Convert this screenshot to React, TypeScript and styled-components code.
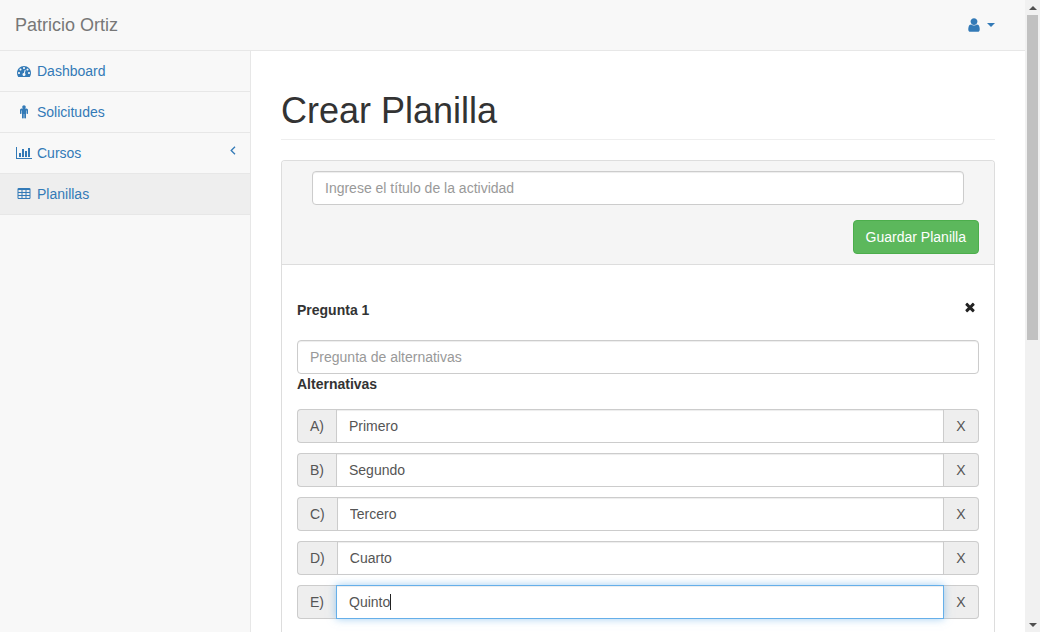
import React from 'react';
import styled, { createGlobalStyle } from 'styled-components';

const Global = createGlobalStyle`
  html, body { margin: 0; padding: 0; height: 100%; overflow: hidden; background: #fff; }
  * { box-sizing: border-box; }
  body { font-family: "Liberation Sans", Arial, sans-serif; font-size: 14px; line-height: 20px; color: #333; }
`;

const Screen = styled.div`
  display: flex;
  width: 1040px;
  height: 632px;
  overflow: hidden;
`;
const Viewport = styled.div`
  flex: 0 0 1025px;
  display: flex;
  flex-direction: column;
  height: 632px;
  overflow: hidden;
  background: #fff;
`;
const TopBar = styled.header`
  flex: 0 0 51px;
  display: flex;
  align-items: center;
  justify-content: space-between;
  padding: 0 30px 1px 15px;
  background: #f8f8f8;
  border-bottom: 1px solid #e7e7e7;
`;
const Brand = styled.a`
  font-size: 18px;
  line-height: 20px;
  color: #777;
`;
const UserMenu = styled.a`
  display: flex;
  align-items: center;
  gap: 5px;
  color: #337ab7;
  svg { display: block; fill: #337ab7; }
`;
const Caret = styled.span`
  width: 0;
  height: 0;
  border-top: 4px solid #337ab7;
  border-left: 4px solid transparent;
  border-right: 4px solid transparent;
`;
const Body = styled.div`
  flex: 1;
  display: flex;
  min-height: 0;
`;
const Sidebar = styled.nav`
  flex: 0 0 251px;
  background: #f8f8f8;
  border-right: 1px solid #e7e7e7;
`;
const MenuItem = styled.a<{ $active?: boolean }>`
  display: flex;
  align-items: center;
  height: 41px;
  padding: 0 15px;
  color: #337ab7;
  background: ${p => (p.$active ? '#eee' : 'transparent')};
  border-bottom: 1px solid #e7e7e7;
`;
const MenuIcon = styled.span<{ $pad: number }>`
  flex: 0 0 22px;
  width: 22px;
  display: flex;
  padding-left: ${p => p.$pad}px;
  svg { display: block; fill: #337ab7; }
`;
const MenuLabel = styled.span`
  flex: 1;
`;
const Chevron = styled.svg`
  display: block;
  width: 6px;
  height: 9px;
  margin: -6px -1px 0 0;
  fill: none;
  stroke: #337ab7;
  stroke-width: 1.3;
`;
const Main = styled.main`
  flex: 1;
  min-width: 0;
  display: flex;
  flex-direction: column;
  padding: 0 30px;
`;
const PageHeader = styled.div`
  margin: 40px 0 20px;
  padding-bottom: 9px;
  border-bottom: 1px solid #eee;
`;
const Title = styled.h1`
  margin: 0;
  font-size: 36px;
  font-weight: 500;
  line-height: 39px;
  color: #333;
`;
const Panel = styled.section`
  flex: 1;
  border: 1px solid #ddd;
  border-bottom: 0;
  border-radius: 4px 4px 0 0;
  background: #fff;
`;
const PanelHeading = styled.div`
  display: flex;
  flex-direction: column;
  padding: 10px 15px;
  background: #f5f5f5;
  border-bottom: 1px solid #ddd;
  border-radius: 3px 3px 0 0;
`;
const TitleRow = styled.div`
  padding: 0 15px;
  margin-bottom: 15px;
`;
const ActionRow = styled.div`
  display: flex;
  justify-content: flex-end;
`;
const SaveButton = styled.button`
  height: 34px;
  padding: 6px 12px;
  font: inherit;
  color: #fff;
  background: #5cb85c;
  border: 1px solid #4cae4c;
  border-radius: 4px;
`;
const PanelBody = styled.div`
  padding: 35px 15px 0;
`;
const QuestionHead = styled.div`
  display: flex;
  justify-content: space-between;
  margin-bottom: 20px;
  height: 20px;
`;
const Strong = styled.label`
  display: block;
  font-weight: 700;
`;
const RemoveIcon = styled.svg`
  display: block;
  width: 14px;
  height: 14px;
  margin: 0 2px 0 0;
  fill: #222;
`;
const TextInput = styled.input`
  display: block;
  width: 100%;
  height: 34px;
  padding: 6px 12px;
  font: inherit;
  color: #555;
  background: #fff;
  border: 1px solid #ccc;
  border-radius: 4px;
  outline: none;
  box-shadow: inset 0 1px 1px rgba(0, 0, 0, .075);
  &::placeholder { color: #999; opacity: 1; }
`;
const Alternatives = styled.div`
  display: flex;
  flex-direction: column;
  gap: 10px;
  margin-top: 15px;
`;
const Group = styled.div`
  display: flex;
  height: 34px;
`;
const Addon = styled.span`
  flex: none;
  display: flex;
  align-items: center;
  padding: 6px 12px;
  color: #555;
  background: #eee;
  border: 1px solid #ccc;
  border-right: 0;
  border-radius: 4px 0 0 4px;
`;
const InputSlot = styled.div<{ $focus?: boolean }>`
  position: relative;
  z-index: ${p => (p.$focus ? 2 : 0)};
  flex: 1;
  min-width: 0;
`;
const GroupInput = styled(TextInput)<{ $focus?: boolean }>`
  border-radius: 0;
  border-color: ${p => (p.$focus ? '#66afe9' : '#ccc')};
  box-shadow: ${p =>
    p.$focus
      ? 'inset 0 1px 1px rgba(0, 0, 0, .075), 0 0 8px rgba(102, 175, 233, .6)'
      : 'inset 0 1px 1px rgba(0, 0, 0, .075)'};
  &:focus {
    border-color: #66afe9;
    box-shadow: inset 0 1px 1px rgba(0, 0, 0, .075), 0 0 8px rgba(102, 175, 233, .6);
  }
`;
const TextCaret = styled.span`
  position: absolute;
  left: 54px;
  top: 9px;
  width: 1px;
  height: 16px;
  background: #222;
`;
const RemoveButton = styled.button`
  flex: none;
  width: 35px;
  padding: 0;
  font: inherit;
  color: #555;
  background: #eee;
  border: 1px solid #ccc;
  border-left: 0;
  border-radius: 0 4px 4px 0;
`;
const Scrollbar = styled.div`
  flex: 0 0 15px;
  display: flex;
  flex-direction: column;
  background: #f1f1f1;
`;
const ArrowCell = styled.div`
  flex: 0 0 15px;
  display: flex;
  align-items: center;
  justify-content: center;
`;
const ArrowUp = styled.span`
  border-bottom: 4px solid #505050;
  border-left: 4px solid transparent;
  border-right: 4px solid transparent;
`;
const ArrowDown = styled.span`
  border-top: 4px solid #505050;
  border-left: 4px solid transparent;
  border-right: 4px solid transparent;
`;
const Track = styled.div`
  flex: 1;
  padding: 0 2px;
`;
const Thumb = styled.div`
  height: 325px;
  background: #c1c1c1;
`;

const Icon = ({ d, w, h, size = 14 }: { d: string; w: number; h: number; size?: number }) => (
  <svg viewBox={`0 0 ${w} ${h}`} width={(size * w) / 1792} height={size} aria-hidden="true">
    <path d={d} />
  </svg>
);

const dashboard = 'M384 1152q0-53-37.5-90.5t-90.5-37.5-90.5 37.5-37.5 90.5 37.5 90.5 90.5 37.5 90.5-37.5 37.5-90.5zm192-448q0-53-37.5-90.5t-90.5-37.5-90.5 37.5-37.5 90.5 37.5 90.5 90.5 37.5 90.5-37.5 37.5-90.5zm428 481l101-382q6-26-7.5-48.5t-38.5-29.5-48 6.5-30 39.5l-101 382q-60 5-107 43.5t-63 98.5q-20 77 20 146t117 89 146-20 89-117q16-60-6-117t-72-91zm660-33q0-53-37.5-90.5t-90.5-37.5-90.5 37.5-37.5 90.5 37.5 90.5 90.5 37.5 90.5-37.5 37.5-90.5zm-640-640q0-53-37.5-90.5t-90.5-37.5-90.5 37.5-37.5 90.5 37.5 90.5 90.5 37.5 90.5-37.5 37.5-90.5zm448 192q0-53-37.5-90.5t-90.5-37.5-90.5 37.5-37.5 90.5 37.5 90.5 90.5 37.5 90.5-37.5 37.5-90.5zm320 448q0 261-141 483-19 29-54 29h-1402q-35 0-54-29-141-221-141-483 0-182 71-348t191-286 286-191 348-71 348 71 286 191 191 286 71 348z';
const male = 'M1024 640v416q0 40-28 68t-68 28-68-28-28-68v-352h-64v912q0 46-33 79t-79 33-79-33-33-79v-464h-64v464q0 46-33 79t-79 33-79-33-33-79v-912h-64v352q0 40-28 68t-68 28-68-28-28-68v-416q0-80 56-136t136-56h640q80 0 136 56t56 136zm-288-384q0 93-65.5 158.5t-158.5 65.5-158.5-65.5-65.5-158.5 65.5-158.5 158.5-65.5 158.5 65.5 65.5 158.5z';
const barChart = 'M640 896v512h-256v-512h256zm384-512v1024h-256v-1024h256zm1024 1152v128h-2048v-1536h128v1408h1920zm-640-896v768h-256v-768h256zm384-384v1152h-256v-1152h256z';
const table = 'M576 1376v-192q0-14-9-23t-23-9h-320q-14 0-23 9t-9 23v192q0 14 9 23t23 9h320q14 0 23-9t9-23zm0-384v-192q0-14-9-23t-23-9h-320q-14 0-23 9t-9 23v192q0 14 9 23t23 9h320q14 0 23-9t9-23zm512 384v-192q0-14-9-23t-23-9h-320q-14 0-23 9t-9 23v192q0 14 9 23t23 9h320q14 0 23-9t9-23zm-512-768v-192q0-14-9-23t-23-9h-320q-14 0-23 9t-9 23v192q0 14 9 23t23 9h320q14 0 23-9t9-23zm512 384v-192q0-14-9-23t-23-9h-320q-14 0-23 9t-9 23v192q0 14 9 23t23 9h320q14 0 23-9t9-23zm512 384v-192q0-14-9-23t-23-9h-320q-14 0-23 9t-9 23v192q0 14 9 23t23 9h320q14 0 23-9t9-23zm-512-768v-192q0-14-9-23t-23-9h-320q-14 0-23 9t-9 23v192q0 14 9 23t23 9h320q14 0 23-9t9-23zm512 384v-192q0-14-9-23t-23-9h-320q-14 0-23 9t-9 23v192q0 14 9 23t23 9h320q14 0 23-9t9-23zm0-384v-192q0-14-9-23t-23-9h-320q-14 0-23 9t-9 23v192q0 14 9 23t23 9h320q14 0 23-9t9-23zm128-320v1088q0 66-47 113t-113 47h-1344q-66 0-113-47t-47-113v-1088q0-66 47-113t113-47h1344q66 0 113 47t47 113z';
const user = 'M1536 1399q0 109-62.5 187t-150.5 78h-854q-88 0-150.5-78t-62.5-187q0-85 8.5-160.5t31.5-152 58.5-131 94-89 134.5-34.5q131 128 313 128t313-128q76 0 134.5 34.5t94 89 58.5 131 31.5 152 8.5 160.5zm-256-887q0 159-112.5 271.5t-271.5 112.5-271.5-112.5-112.5-271.5 112.5-271.5 271.5-112.5 271.5 112.5 112.5 271.5z';
const times = 'M1490 1322q0 40-28 68l-136 136q-28 28-68 28t-68-28l-294-294-294 294q-28 28-68 28t-68-28l-136-136q-28-28-28-68t28-68l294-294-294-294q-28-28-28-68t28-68l136-136q28-28 68-28t68 28l294 294 294-294q28-28 68-28t68 28l136 136q28 28 28 68t-28 68l-294 294 294 294q28 28 28 68z';

const menu = [
  { label: 'Dashboard', d: dashboard, w: 1792, h: 1792, pad: 2 },
  { label: 'Solicitudes', d: male, w: 1024, h: 1792, pad: 5 },
  { label: 'Cursos', d: barChart, w: 2048, h: 1792, pad: 1, chevron: true },
  { label: 'Planillas', d: table, w: 1792, h: 1792, pad: 2, active: true },
];

const answers = [
  { key: 'A)', value: 'Primero' },
  { key: 'B)', value: 'Segundo' },
  { key: 'C)', value: 'Tercero' },
  { key: 'D)', value: 'Cuarto' },
  { key: 'E)', value: 'Quinto', focus: true },
];

export default function App() {
  return (
    <Screen>
      <Global />
      <Viewport>
        <TopBar>
          <Brand>Patricio Ortiz</Brand>
          <UserMenu>
            <Icon d={user} w={1792} h={1792} size={16} />
            <Caret />
          </UserMenu>
        </TopBar>
        <Body>
          <Sidebar>
            {menu.map(m => (
              <MenuItem key={m.label} $active={m.active}>
                <MenuIcon $pad={m.pad}>
                  <Icon d={m.d} w={m.w} h={m.h} />
                </MenuIcon>
                <MenuLabel>{m.label}</MenuLabel>
                {m.chevron && (
                  <Chevron viewBox="0 0 6 9">
                    <path d="M5 .8 1.2 4.5 5 8.2" />
                  </Chevron>
                )}
              </MenuItem>
            ))}
          </Sidebar>
          <Main>
            <PageHeader>
              <Title>Crear Planilla</Title>
            </PageHeader>
            <Panel>
              <PanelHeading>
                <TitleRow>
                  <TextInput placeholder="Ingrese el título de la actividad" />
                </TitleRow>
                <ActionRow>
                  <SaveButton>Guardar Planilla</SaveButton>
                </ActionRow>
              </PanelHeading>
              <PanelBody>
                <QuestionHead>
                  <Strong>Pregunta 1</Strong>
                  <RemoveIcon viewBox="0 0 1792 1792">
                    <path d={times} />
                  </RemoveIcon>
                </QuestionHead>
                <TextInput placeholder="Pregunta de alternativas" />
                <Strong>Alternativas</Strong>
                <Alternatives>
                  {answers.map(a => (
                    <Group key={a.key}>
                      <Addon>{a.key}</Addon>
                      <InputSlot $focus={a.focus}>
                        <GroupInput defaultValue={a.value} $focus={a.focus} />
                        {a.focus && <TextCaret />}
                      </InputSlot>
                      <RemoveButton>X</RemoveButton>
                    </Group>
                  ))}
                </Alternatives>
              </PanelBody>
            </Panel>
          </Main>
        </Body>
      </Viewport>
      <Scrollbar>
        <ArrowCell><ArrowUp /></ArrowCell>
        <Track><Thumb /></Track>
        <ArrowCell><ArrowDown /></ArrowCell>
      </Scrollbar>
    </Screen>
  );
}
